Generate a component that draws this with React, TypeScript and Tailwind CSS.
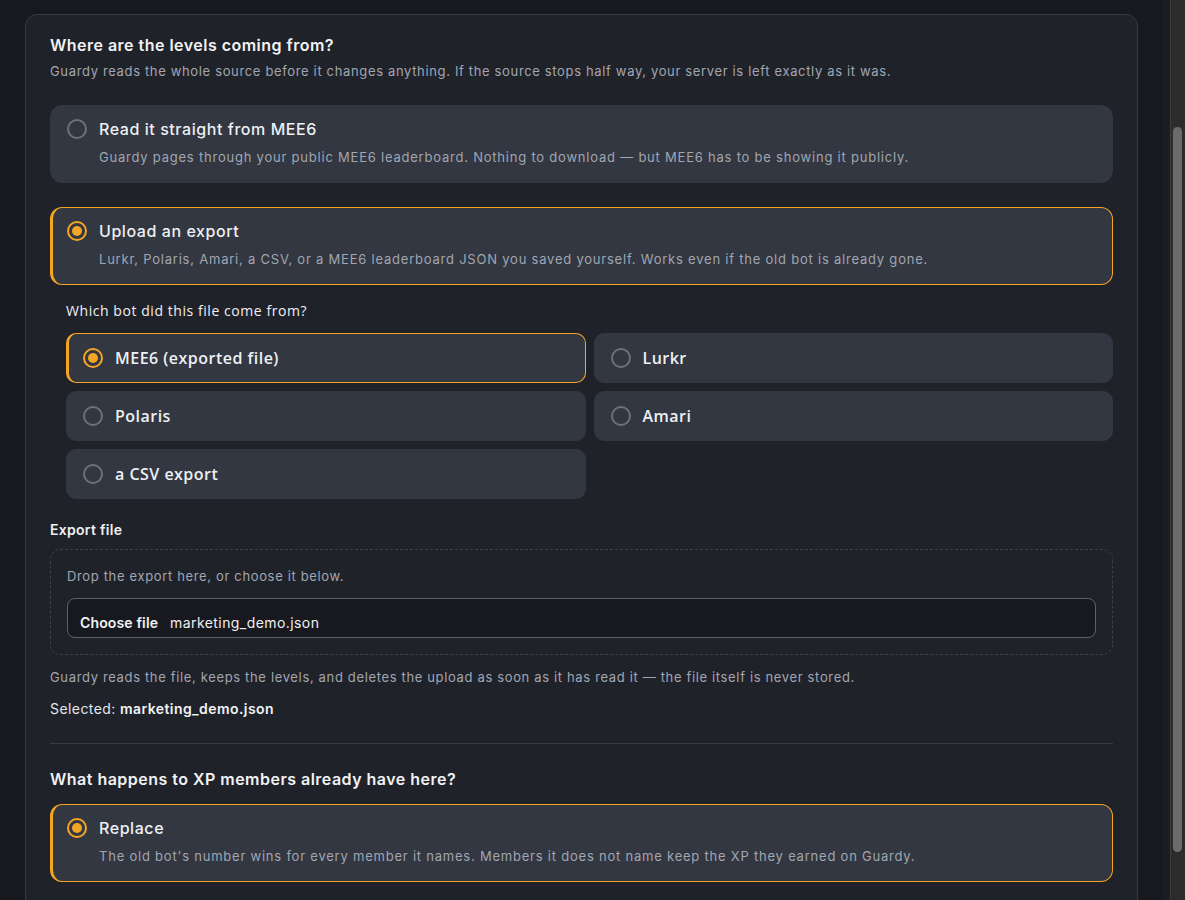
import { useState } from 'react';

type Source = 'mee6' | 'upload';
type Bot = 'mee6' | 'lurkr' | 'polaris' | 'amari' | 'csv';

const bots: { id: Bot; label: string }[] = [
    { id: 'mee6', label: 'MEE6 (exported file)' },
    { id: 'lurkr', label: 'Lurkr' },
    { id: 'polaris', label: 'Polaris' },
    { id: 'amari', label: 'Amari' },
    { id: 'csv', label: 'a CSV export' },
];

const Radio = ({ checked }: { checked: boolean }) => (
    <span
        className={`flex h-5 w-5 shrink-0 items-center justify-center rounded-full border-2 ${checked ? 'border-[#f5a524]' : 'border-[#6c717c]'}`}
    >
        {checked && <span className="h-2.5 w-2.5 rounded-full bg-[#f5a524]" />}
    </span>
);

interface OptionCardProps {
    checked: boolean;
    title: string;
    desc: string;
    onClick: () => void;
}

const OptionCard = ({ checked, title, desc, onClick }: OptionCardProps) => (
    <button
        type="button"
        onClick={onClick}
        className={`block w-full rounded-[12px] border bg-[#323741] pt-[11px] pb-[15px] pr-4 text-left ${checked ? 'border-[#f5a524] border-l-[3px] pl-[14px]' : 'border-[#323741] pl-4'}`}
    >
        <div className="flex items-center gap-3">
            <Radio checked={checked} />
            <span className="text-[16px] leading-6 font-medium tracking-[0.035em] text-[#eef0f3]">{title}</span>
        </div>
        <p className="mt-1.5 pl-8 text-[13px] leading-5 tracking-[0.06em] text-[#a1a6b1]">{desc}</p>
    </button>
);

export default function App() {
    const [source, setSource] = useState<Source>('upload');
    const [bot, setBot] = useState<Bot>('mee6');
    const [mode, setMode] = useState('replace');

    return (
        <div className="flex h-[900px] overflow-hidden bg-[#17191f] font-['Inter',sans-serif]">
            <main className="flex-1 pl-[25px] pr-[24px] pt-[14px]">
                <section className="rounded-[12px] border border-[#363943] bg-[#20222a] px-6 pt-[18px] pb-10">
                    <h2 className="text-[16px] leading-6 font-semibold tracking-[0.03em] text-[#f1f2f4]">Where are the levels coming from?</h2>
                    <p className="mt-1 text-[13px] leading-5 tracking-[0.05em] text-[#a1a6b1]">
                        Guardy reads the whole source before it changes anything. If the source stops half way, your server is left exactly as it was.
                    </p>

                    <div className="mt-6 flex flex-col gap-6">
                        <OptionCard
                            checked={source === 'mee6'}
                            onClick={() => setSource('mee6')}
                            title="Read it straight from MEE6"
                            desc="Guardy pages through your public MEE6 leaderboard. Nothing to download — but MEE6 has to be showing it publicly."
                        />
                        <OptionCard
                            checked={source === 'upload'}
                            onClick={() => setSource('upload')}
                            title="Upload an export"
                            desc="Lurkr, Polaris, Amari, a CSV, or a MEE6 leaderboard JSON you saved yourself. Works even if the old bot is already gone."
                        />
                    </div>

                    {/* bot picker */}
                    <div className="pl-4">
                        <p className="mt-4 font-['Open_Sans',sans-serif] text-[14px] leading-5 font-medium tracking-[0.04em] text-[#eef0f3]">
                            Which bot did this file come from?
                        </p>
                        <div className="mt-3 grid grid-cols-2 gap-2">
                            {bots.map((b) => {
                                const on = bot === b.id;
                                return (
                                    <button
                                        key={b.id}
                                        type="button"
                                        onClick={() => setBot(b.id)}
                                        className={`flex h-[50px] items-center gap-3 rounded-[10px] border bg-[#323741] pr-4 text-left ${on ? 'border-[#f5a524] border-l-[3px] pl-[14px]' : 'border-[#323741] pl-4'}`}
                                    >
                                        <Radio checked={on} />
                                        <span className="font-['Open_Sans',sans-serif] text-[16px] font-semibold tracking-[0.03em] text-[#eef0f3]">{b.label}</span>
                                    </button>
                                );
                            })}
                        </div>
                    </div>

                    {/* file upload */}
                    <p className="mt-[21px] text-[14px] leading-5 font-semibold tracking-[0.02em] text-[#eef0f3]">Export file</p>
                    <div className="mt-[9px] rounded-[10px] border border-dashed border-[#3c404a] p-4">
                        <p className="text-[13px] leading-5 tracking-[0.05em] text-[#a1a6b1]">Drop the export here, or choose it below.</p>
                        <div className="mt-3 flex h-10 items-start gap-3 rounded-[8px] border border-[#5b616d] bg-[#18191f] pl-3 pt-[14px]">
                            <span className="text-[14px] leading-5 font-semibold tracking-[0.01em] text-[#f1f2f4]">Choose file</span>
                            <span className="text-[14px] leading-5 tracking-[0.03em] text-[#eef0f3]">marketing_demo.json</span>
                        </div>
                    </div>
                    <p className="mt-3 text-[13px] leading-5 tracking-[0.05em] text-[#a1a6b1]">
                        Guardy reads the file, keeps the levels, and deletes the upload as soon as it has read it — the file itself is never stored.
                    </p>
                    <p className="mt-3 text-[14px] leading-5 tracking-[0.03em] text-[#e4e6ea]">
                        Selected: <span className="font-semibold text-[#f1f2f4]">marketing_demo.json</span>
                    </p>

                    <div className="mt-6 h-px bg-[#383b45]" />

                    <h2 className="mt-[23px] text-[16px] leading-6 font-semibold tracking-[0.03em] text-[#f1f2f4]">What happens to XP members already have here?</h2>
                    <div className="mt-[13px]">
                        <OptionCard
                            checked={mode === 'replace'}
                            onClick={() => setMode('replace')}
                            title="Replace"
                            desc="The old bot's number wins for every member it names. Members it does not name keep the XP they earned on Guardy."
                        />
                    </div>
                </section>
            </main>

            {/* window scrollbar */}
            <div className="w-[8px] bg-[#1b1d24]" />
            <div className="w-[15px] border-l border-[#3b3b3b] bg-[#2c2c2c] pt-[127px]">
                <div className="ml-[2px] h-[725px] w-[9px] rounded-full bg-[#6b6b6b]" />
            </div>
        </div>
    );
}
